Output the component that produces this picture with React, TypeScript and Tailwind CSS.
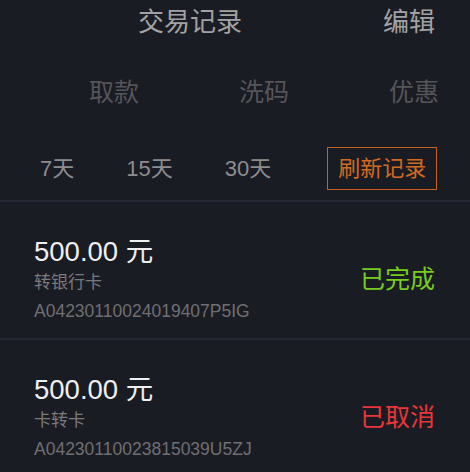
const FONT = "font-['Liberation_Sans','Noto_Sans_CJK_SC',sans-serif]";

type Record = {
  amount: string;
  kind: string;
  id: string;
  status: 'done' | 'cancelled';
};

const RECORDS: Record[] = [
  { amount: '500.00', kind: '转银行卡', id: 'A04230110024019407P5IG', status: 'done' },
  { amount: '500.00', kind: '卡转卡', id: 'A04230110023815039U5ZJ', status: 'cancelled' },
];

function RecordRow({ r }: { r: Record }) {
  return (
    <div className="flex items-center justify-between pl-[34px] pr-[35px] pt-[35px] pb-[15px]">
      <div className="flex flex-col">
        <p className="text-[27.5px] leading-[30px] text-[#efeff0]">{r.amount} 元</p>
        <p className="mt-[3px] text-[17px] leading-[26px] text-[#7a7a7d]">{r.kind}</p>
        <p className="mt-[3px] text-[17.5px] leading-[24px] text-[#6f6f72]">{r.id}</p>
      </div>
      <span
        className={
          r.status === 'done'
            ? 'mb-[3px] text-[25px] leading-[30px] text-[#78cc1f]'
            : 'mb-[3px] text-[25px] leading-[30px] text-[#e8363a]'
        }
      >
        {r.status === 'done' ? '已完成' : '已取消'}
      </span>
    </div>
  );
}

export default function App() {
  return (
    <div className={`${FONT} h-[472px] w-[470px] overflow-hidden bg-[#1a1c23]`}>
      <div className="flex h-[43px] items-center pl-[138px] pr-[35px]">
        <h1 className="text-[26px] leading-[30px] text-[#a2a2a4]">交易记录</h1>
        <span className="ml-auto text-[26px] leading-[30px] text-[#a2a2a4]">编辑</span>
      </div>

      <div className="mt-[34px] flex pl-[39px]">
        {['取款', '洗码', '优惠'].map((t) => (
          <span key={t} className="w-[150px] shrink-0 text-center text-[25px] leading-[30px] text-[#555559]">
            {t}
          </span>
        ))}
      </div>

      <div className="mt-[40px] flex items-center pl-[40px]">
        <span className="text-[22px] leading-[28px] text-[#8c8c8f]">7天</span>
        <span className="ml-[52px] text-[22px] leading-[28px] text-[#8c8c8f]">15天</span>
        <span className="ml-[52px] text-[22px] leading-[28px] text-[#8c8c8f]">30天</span>
        <button
          type="button"
          className="ml-[56px] h-[43px] w-[110px] border-[1.5px] border-[#c8611c] text-[22px] leading-[28px] text-[#d26a22]"
        >
          刷新记录
        </button>
      </div>

      <div className="mt-[10px] h-[2px] bg-[#242834]" />
      {RECORDS.map((r, i) => (
        <div key={r.id}>
          <RecordRow r={r} />
          {i < RECORDS.length - 1 && <div className="h-[2px] bg-[#242834]" />}
        </div>
      ))}
    </div>
  );
}
